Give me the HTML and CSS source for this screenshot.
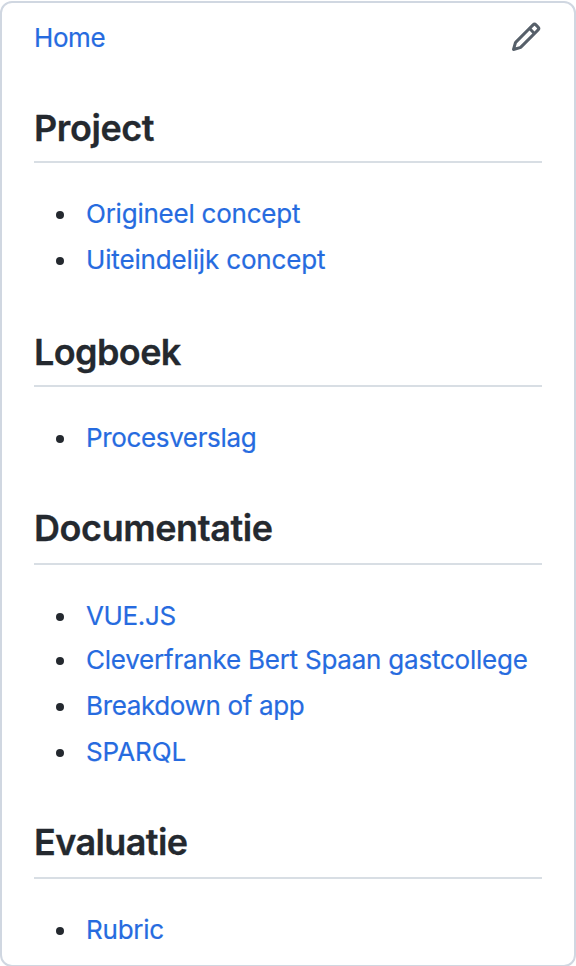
FILE: index.html
```html
<!DOCTYPE html>
<html lang="nl">
<head>
<meta charset="utf-8">
<title>Wiki sidebar</title>
<link rel="stylesheet" href="styles.css">
</head>
<body>
<aside class="sidebar">
  <header class="top">
    <a class="home" href="#">Home</a>
    <a class="edit" href="#" aria-label="Edit"><svg viewBox="0 0 16 16" width="32" height="32"><path fill="currentColor" d="M11.013 1.427a1.75 1.75 0 012.474 0l1.086 1.086a1.75 1.75 0 010 2.474l-8.61 8.61c-.21.21-.47.364-.756.445l-3.251.93a.75.75 0 01-.927-.928l.929-3.25a1.75 1.75 0 01.445-.758l8.61-8.61zm1.414 1.06a.25.25 0 00-.354 0L10.811 3.75l1.439 1.44 1.263-1.263a.25.25 0 000-.354l-1.086-1.086zM11.189 6.25L9.75 4.81l-6.286 6.287a.25.25 0 00-.064.108l-.558 1.953 1.953-.558a.249.249 0 00.108-.064l6.286-6.286z"/></svg></a>
  </header>
  <section class="project">
    <h2>Project</h2>
    <ul>
      <li><a href="#">Origineel concept</a></li>
      <li><a class="wide" href="#">Uiteindelijk concept</a></li>
    </ul>
  </section>
  <section class="logboek">
    <h2>Logboek</h2>
    <ul>
      <li><a class="tight" href="#">Procesverslag</a></li>
    </ul>
  </section>
  <section class="documentatie">
    <h2>Documentatie</h2>
    <ul>
      <li><a class="tight" href="#">VUE.JS</a></li>
      <li><a href="#">Cleverfranke Bert Spaan gastcollege</a></li>
      <li><a class="tight" href="#">Breakdown of app</a></li>
      <li><a class="caps" href="#">SPARQL</a></li>
    </ul>
  </section>
  <section class="evaluatie">
    <h2>Evaluatie</h2>
    <ul>
      <li><a href="#">Rubric</a></li>
    </ul>
  </section>
</aside>
</body>
</html>
```
FILE: styles.css
```css
* { box-sizing: border-box; }
html { overflow: hidden; }
body { margin: 0; padding-top: 1px; height: 966px; overflow: hidden; background: #fff; color: #24292f; font-family: Inter, "Liberation Sans", sans-serif; }
.sidebar { height: 966px; border: 2px solid #d0d7e1; border-radius: 12px; padding: 0 32px; overflow: hidden; }
a { color: #266bdf; text-decoration: none; letter-spacing: -.23px; -webkit-text-stroke: .2px currentColor; }
.top { display: flex; justify-content: space-between; height: 71px; padding-top: 15px; font-size: 26px; line-height: 40px; }
.home { letter-spacing: -.4px; }
.edit { height: 32px; margin-top: 3px; color: #57606a; }
.edit svg { display: block; }
h2 { margin: 0; height: 89px; padding-top: 31px; border-bottom: 2px solid #d8dee4; font-size: 36px; line-height: 46px; font-weight: 600; letter-spacing: -.42px; -webkit-text-stroke: .3px currentColor; }
ul { margin: 0; padding: 29px 0 18px; list-style: none; }
li { display: flex; align-items: center; height: 42px; font-size: 26px; }
li::before { content: ""; width: 8px; height: 8px; margin: 4px 22px 0; border-radius: 50%; background: #24292f; }
li + li { margin-top: 4px; }
.wide { letter-spacing: -.16px; }
.tight { letter-spacing: -.36px; }
.caps { letter-spacing: -.1px; }
.logboek h2, .evaluatie h2 { letter-spacing: -.6px; }
.logboek ul, .documentatie ul { padding-bottom: 16px; }
.documentatie h2, .evaluatie h2 { height: 91px; }
.documentatie li:nth-child(2) { margin-top: 2px; }
```
